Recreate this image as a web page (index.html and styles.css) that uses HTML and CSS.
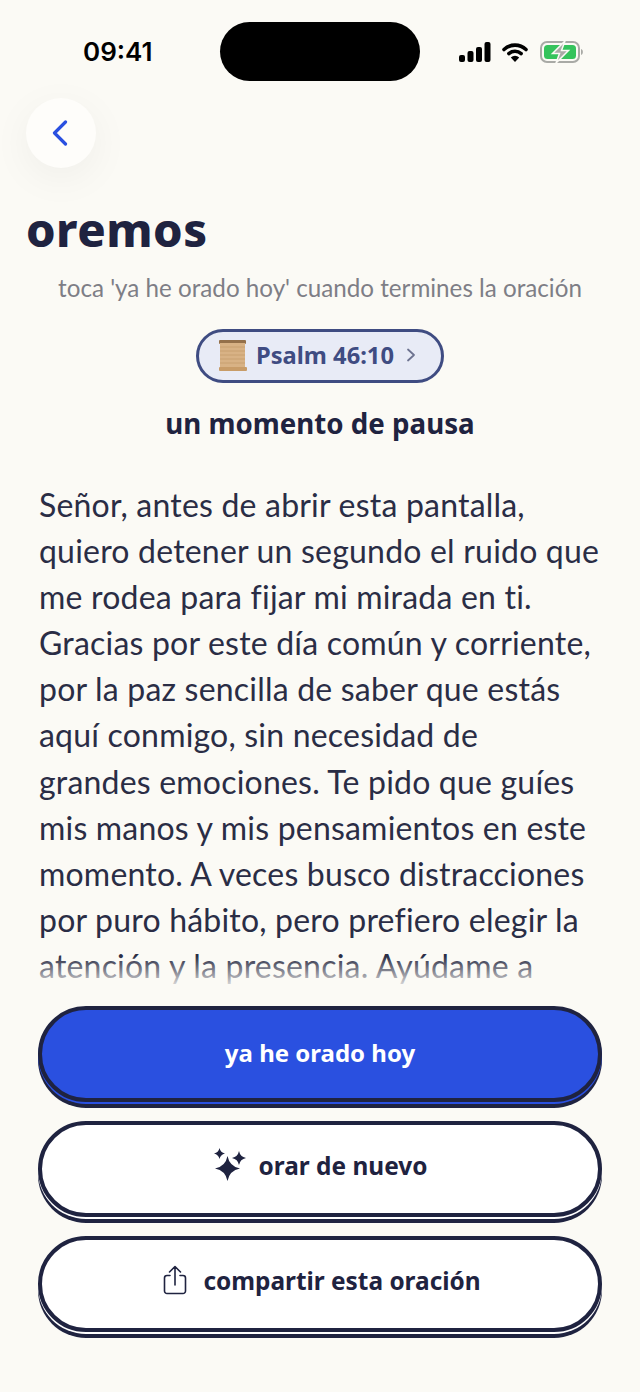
FILE: index.html
```html
<!DOCTYPE html>
<html lang="es">
<head>
    <meta charset="UTF-8">
    <meta name="viewport" content="width=device-width, initial-scale=1.0">
    <title>oremos</title>
    <link rel="stylesheet" href="styles.css">
</head>
<body>
    <div class="screen">
        <div class="status-bar">
            <span class="time">09:41</span>
            <div class="island"></div>
            <div class="status-icons">
                <svg width="32" height="20" viewBox="0 0 32 20">
                    <rect x="0" y="13" width="6" height="7" rx="2" fill="#000"/>
                    <rect x="8.5" y="9" width="6" height="11" rx="2" fill="#000"/>
                    <rect x="17" y="5" width="6" height="15" rx="2" fill="#000"/>
                    <rect x="25.5" y="0" width="6" height="20" rx="2" fill="#000"/>
                </svg>
                <svg width="26" height="20" viewBox="0 0 26 20">
                    <path d="M2 7.5 A16 16 0 0 1 24 7.5" fill="none" stroke="#000" stroke-width="3.6" stroke-linecap="round"/>
                    <path d="M6.8 11.6 A9.5 9.5 0 0 1 19.2 11.6" fill="none" stroke="#000" stroke-width="3.4" stroke-linecap="round"/>
                    <path d="M13 20 L8.8 15.4 A6 6 0 0 1 17.2 15.4 Z" fill="#000"/>
                </svg>
                <svg class="battery" width="44" height="22" viewBox="0 0 44 22">
                    <rect x="1" y="1" width="38" height="20" rx="6" fill="none" stroke="#a9aaa6" stroke-width="2"/>
                    <rect x="4" y="4" width="32" height="14" rx="3.5" fill="#35c35c"/>
                    <path d="M41 8 C43.5 8.5 43.5 13.5 41 14 Z" fill="#a9aaa6"/>
                    <path d="M25 0 L12.5 12.5 H19.5 L16 22 L28.5 9.5 H21.5 Z" fill="#a9aaa6" stroke="#fbfaf5" stroke-width="1.5"/>
                </svg>
            </div>
        </div>

        <button class="back-btn" aria-label="volver">
            <svg width="18" height="26" viewBox="0 0 18 26">
                <path d="M14.5 2 L3.5 13 L14.5 24" fill="none" stroke="#2a50e0" stroke-width="3.2" stroke-linecap="round" stroke-linejoin="round"/>
            </svg>
        </button>

        <h1 class="title">oremos</h1>
        <p class="hint">toca 'ya he orado hoy' cuando termines la oración</p>

        <div class="verse-row">
            <a class="verse-pill">
                <svg class="scroll-icon" width="30" height="32" viewBox="0 0 30 32">
                    <rect x="1" y="0" width="27" height="4" rx="1" fill="#94704a"/>
                    <rect x="2" y="3" width="25" height="25" fill="#d8b285"/>
                    <path d="M2 7 H27 M2 11 H27 M2 15 H27 M2 19 H27 M2 23 H27" stroke="#c8a070" stroke-width="1"/>
                    <rect x="1" y="27" width="28" height="4" rx="1" fill="#c89c68"/>
                </svg>
                <span>Psalm 46:10</span>
                <svg width="10" height="14" viewBox="0 0 10 14">
                    <path d="M2 1.5 L8 7 L2 12.5" fill="none" stroke="#6d7390" stroke-width="1.8" stroke-linecap="round" stroke-linejoin="round"/>
                </svg>
            </a>
        </div>

        <h2 class="prayer-title">un momento de pausa</h2>

        <div class="prayer">
            <p>Señor, antes de abrir esta pantalla,<br>quiero detener un segundo el ruido que<br>me rodea para fijar mi mirada en ti.<br>Gracias por este día común y corriente,<br>por la paz sencilla de saber que estás<br>aquí conmigo, sin necesidad de<br>grandes emociones. Te pido que guíes<br>mis manos y mis pensamientos en este<br>momento. A veces busco distracciones<br>por puro hábito, pero prefiero elegir la<br>atención y la presencia. Ayúdame a</p>
            <div class="fade"></div>
        </div>

        <div class="actions">
            <button class="btn btn-primary">ya he orado hoy</button>
            <button class="btn">
                <svg width="34" height="34" viewBox="0 0 34 34">
                    <path d="M14.5 8 Q16.5 18.5 27 20.5 Q16.5 22.5 14.5 33 Q12.5 22.5 2 20.5 Q12.5 18.5 14.5 8 Z" fill="#1f2340"/>
                    <path d="M6.5 0 Q7.5 4.5 12 5.5 Q7.5 6.5 6.5 11 Q5.5 6.5 1 5.5 Q5.5 4.5 6.5 0 Z" fill="#1f2340"/>
                    <path d="M26 3 Q27.2 8.8 33 10 Q27.2 11.2 26 17 Q24.8 11.2 19 10 Q24.8 8.8 26 3 Z" fill="#1f2340"/>
                </svg>
                <span>orar de nuevo</span>
            </button>
            <button class="btn">
                <svg class="share-icon" width="24" height="30" viewBox="0 0 24 30">
                    <path d="M7 10.5 H4 A2.5 2.5 0 0 0 1.5 13 V26 A2.5 2.5 0 0 0 4 28.5 H20 A2.5 2.5 0 0 0 22.5 26 V13 A2.5 2.5 0 0 0 20 10.5 H17" fill="none" stroke="#1f2340" stroke-width="1.6" stroke-linecap="round"/>
                    <path d="M12 20 V2 M6.5 7 L12 1.5 L17.5 7" fill="none" stroke="#1f2340" stroke-width="1.6" stroke-linecap="round" stroke-linejoin="round"/>
                </svg>
                <span>compartir esta oración</span>
            </button>
        </div>
    </div>
</body>
</html>
```

FILE: styles.css
```css
* {
    box-sizing: border-box;
}
body {
    margin: 0;
    background-color: #fbfaf5;
    font-family: "Noto Sans", sans-serif;
    color: #1f2340;
}
.screen {
    width: 640px;
    height: 1392px;
    overflow: hidden;
    padding-top: 22px;
}
.status-bar {
    display: grid;
    grid-template-columns: 220px 200px 220px;
    align-items: center;
    height: 59px;
}
.time {
    font-family: "Inter", sans-serif;
    font-size: 26px;
    font-weight: 600;
    color: #000;
    padding-left: 83px;
}
.island {
    height: 59px;
    background-color: #000;
    border-radius: 30px;
}
.status-icons {
    display: flex;
    align-items: center;
    gap: 11px;
    padding-left: 39px;
}
.battery {
    margin-left: 1px;
}
.back-btn {
    display: flex;
    align-items: center;
    justify-content: center;
    width: 70px;
    height: 70px;
    margin: 17px 0 0 26px;
    padding: 0 2px 0 0;
    border: none;
    border-radius: 50%;
    background-color: #fefdfa;
    box-shadow: 0 10px 40px rgba(0, 0, 0, 0.05);
}
.title {
    margin: 31px 0 0 26px;
    font-size: 47px;
    line-height: 60px;
    font-weight: 800;
    letter-spacing: 0.5px;
}
.hint {
    margin: 12px 0 0;
    text-align: center;
    font-family: "Lato", sans-serif;
    font-size: 24.2px;
    line-height: 34px;
    color: #7e7e86;
}
.verse-row {
    display: flex;
    justify-content: center;
    margin-top: 24px;
}
.verse-pill {
    display: flex;
    align-items: center;
    width: 248px;
    height: 54px;
    padding: 0 0 2px 19px;
    gap: 8px;
    border: 3.5px solid #3f4c82;
    border-radius: 27px;
    background-color: #e8ebf6;
    color: #3f4c82;
    font-size: 23.7px;
    font-weight: 700;
}
.verse-pill span {
    margin-right: 4px;
}
.scroll-icon {
    margin-top: 2px;
}
.prayer-title {
    margin: 22px 0 0;
    text-align: center;
    font-size: 27.7px;
    line-height: 36px;
    font-weight: 700;
}
.prayer {
    position: relative;
    height: 524px;
    margin-top: 41px;
    padding-left: 39px;
    overflow: hidden;
}
.prayer p {
    margin: 0;
    font-family: "Lato", sans-serif;
    font-size: 32px;
    letter-spacing: 0.2px;
    line-height: 46.1px;
    color: #2a2d45;
    white-space: nowrap;
}
.fade {
    position: absolute;
    left: 0;
    right: 0;
    bottom: 0;
    height: 50px;
    background: linear-gradient(rgba(251, 250, 245, 0), #fbfaf5 70%);
}
.actions {
    display: flex;
    flex-direction: column;
    gap: 19px;
    padding: 0 38px;
}
.btn {
    display: flex;
    align-items: center;
    justify-content: center;
    gap: 12px;
    width: 100%;
    height: 96px;
    border: 4px solid #1f2340;
    border-radius: 48px;
    background-color: #fff;
    box-shadow: 0 2px 0 0 #fff, 0 6px 0 0 #1f2340;
    color: #1f2340;
    font-family: "Noto Sans", sans-serif;
    font-size: 24.4px;
    font-weight: 700;
    padding: 0 0 8px;
}
.btn-primary {
    background-color: #2a50e0;
    box-shadow: 0 2px 0 0 #2a50e0, 0 6px 0 0 #1f2340;
    color: #fff;
    font-size: 24px;
    padding-bottom: 4px;
}
.share-icon {
    margin: 0 4px;
}
```
